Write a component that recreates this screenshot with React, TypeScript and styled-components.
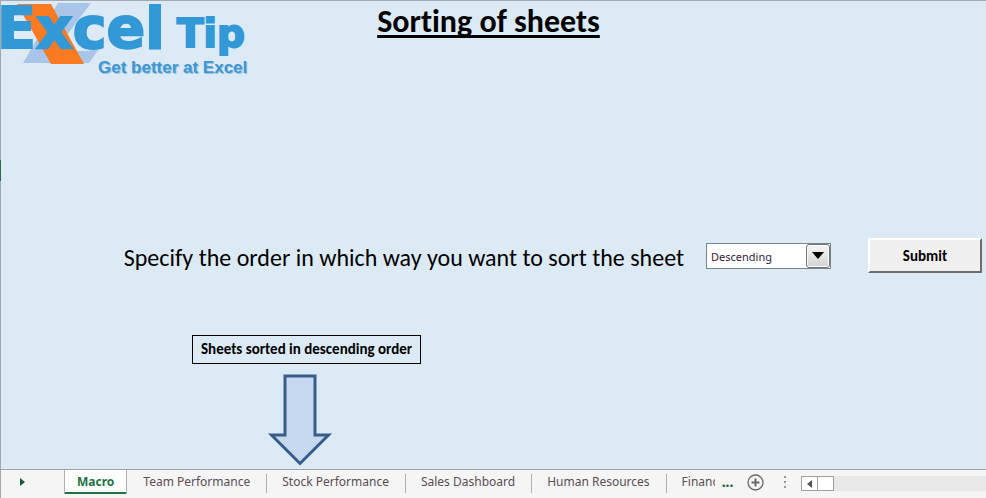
import React, { useState } from "react";
import styled, { createGlobalStyle } from "styled-components";

const GlobalStyle = createGlobalStyle`
  *, *::before, *::after { box-sizing: border-box; }
  body { margin: 0; background: #dceaf5; }
  button, select { font: inherit; color: inherit; margin: 0; }
`;

const interfaceFont = `"Noto Sans", "Open Sans", sans-serif`;
const sheetFont = `Calibri, Carlito, Lato, sans-serif`;

const Workbook = styled.div`
  display: flex;
  flex-direction: column;
  min-height: 100vh;
  border-top: 1px solid #a3a9b0;
  border-left: 1px solid #a3a9b0;
  font-family: ${interfaceFont};
  color: #000;
`;

const Sheet = styled.main`
  flex: 1;
  display: flex;
  flex-direction: column;
  background: #dceaf5;
`;

const Header = styled.header`
  display: grid;
  grid-template-columns: 1fr auto 1fr;
  align-items: start;
  padding-right: 10px;
`;

const Logo = styled.svg`
  display: block;
  width: 256px;
  height: 84px;
  overflow: visible;
`;

const Title = styled.h1`
  margin: 2px 0 0;
  font-family: ${sheetFont};
  font-size: 32px;
  line-height: 38px;
  font-weight: 700;
  text-decoration: underline;
  text-decoration-thickness: 3px;
  text-underline-offset: 3px;
  text-decoration-skip-ink: none;
  font-variant-ligatures: none;
  white-space: nowrap;
`;

const ActiveRowMark = styled.div`
  width: 1px;
  height: 21px;
  margin-top: 75px;
  margin-left: -1px;
  background: #217346;
`;

const OrderForm = styled.form`
  display: flex;
  justify-content: flex-end;
  align-items: center;
  margin-top: 57px;
  padding-right: 4px;
`;

const Prompt = styled.label`
  margin-right: 22px;
  padding-top: 4px;
  font-family: ${sheetFont};
  font-size: 24px;
  line-height: 28px;
  font-variant-ligatures: none;
  white-space: nowrap;
`;

const SelectFrame = styled.div`
  position: relative;
  width: 125px;
  height: 26px;
  margin-right: 37px;
`;

const OrderSelect = styled.select`
  appearance: none;
  width: 100%;
  height: 100%;
  padding: 2px 28px 0 4px;
  border: 1px solid #7b8288;
  border-radius: 0;
  background: #fff;
  color: #38203c;
  font-size: 11px;
`;

const SelectArrow = styled.span`
  position: absolute;
  top: 1px;
  right: 1px;
  bottom: 1px;
  display: flex;
  align-items: center;
  justify-content: center;
  width: 24px;
  border: 1px solid #70757a;
  border-radius: 3px;
  background: linear-gradient(#f5f5f5, #e6e6e6 50%, #d2d2d2);
  box-shadow: inset 0 0 0 1px #fafafa;
  pointer-events: none;
`;

const SubmitButton = styled.button`
  width: 114px;
  height: 35px;
  padding: 0;
  border: 2px solid;
  border-color: #fff #6d6d6d #6d6d6d #fff;
  background: #f0f0f0;
  font-family: ${sheetFont};
  font-size: 15px;
  font-weight: 700;
`;

const Callout = styled.section`
  display: flex;
  flex-direction: column;
  align-items: flex-start;
  margin-top: 62px;
  margin-left: 191px;
`;

const Note = styled.p`
  margin: 0;
  padding: 0 8px;
  border: 1px solid #000;
  font-family: ${sheetFont};
  font-size: 15px;
  line-height: 27px;
  font-weight: 700;
  white-space: nowrap;
`;

const DownArrow = styled.svg`
  display: block;
  width: 66px;
  height: 94px;
  margin-top: 9px;
  margin-left: 75px;
  margin-bottom: 2px;
`;

const TabBar = styled.footer`
  display: flex;
  align-items: stretch;
  height: 29px;
  padding-bottom: 4px;
  border-top: 1px solid #9aa5b1;
  background: #f5f5f5;
`;

const IconButton = styled.button<{ $width: number }>`
  display: flex;
  align-items: center;
  justify-content: center;
  flex: none;
  width: ${(p) => p.$width}px;
  padding: 0;
  border: 0;
  background: none;
  color: #185c37;
`;

const Tabs = styled.nav`
  display: flex;
  flex: none;
  margin-left: 21px;
`;

const Tab = styled.button<{ $active?: boolean }>`
  position: relative;
  flex: none;
  padding: 0 16px;
  border: 0;
  background: none;
  color: #5a4d54;
  font-size: 12px;
  line-height: 24px;
  white-space: nowrap;

  & + &::before {
    content: "";
    position: absolute;
    top: 4px;
    bottom: 1px;
    left: 0;
    width: 1px;
    background: #b0b0b0;
  }

  ${(p) =>
    p.$active &&
    `
    padding: 0 12px;
    border: solid #a9b0b8;
    border-width: 0 1px;
    box-shadow: inset 0 -2px #217346;
    background: #fff;
    color: #217346;
    font-weight: 700;
    & + button::before { display: none; }
  `}
`;

const ClippedTab = styled(Tab)`
  width: 49px;
  padding-right: 0;
  overflow: hidden;
  text-align: left;
`;

const MoreTabs = styled(IconButton)`
  font-size: 14px;
  font-weight: 700;
  padding-bottom: 2px;
`;

const ScrollBar = styled.div`
  display: flex;
  flex: 1;
  height: 15px;
  margin-top: 6px;
  margin-left: 2px;
  background: #e8e8e8;
`;

const ScrollPart = styled.button`
  display: flex;
  align-items: center;
  justify-content: center;
  width: 17px;
  padding: 0;
  border: 1px solid #a0a0a0;
  background: #fff;

  & + & { margin-left: -1px; }
`;

const sheets = ["Macro", "Team Performance", "Stock Performance", "Sales Dashboard", "Human Resources"];

function ExcelTipLogo() {
  return (
    <Logo viewBox="0 0 256 84" role="img" aria-label="Excel Tip, Get better at Excel">
      <path d="M57 2H90L54 50H86L98 48L88 62H22Z" fill="#a9c6ea" />
      <path d="M16 3H50L83 63H50Z" fill="#fa7a21" />
      <g fill="#3398d6" stroke="#3398d6" strokeWidth="2" fontFamily="'DejaVu Sans', sans-serif" fontWeight="700">
        <text x="-4" y="47" fontSize="57">Excel</text>
        <text x="176" y="46" fontSize="39">Tip</text>
      </g>
      <g fontFamily="'Liberation Sans', Arial, sans-serif" fontWeight="700" fontSize="17">
        <text x="98" y="73" fill="#9dbfdc">Get better at Excel</text>
        <text x="97" y="72" fill="#3f97d2">Get better at Excel</text>
      </g>
    </Logo>
  );
}

export default function App() {
  const [order, setOrder] = useState("Descending");
  const [active, setActive] = useState("Macro");

  return (
    <>
      <GlobalStyle />
      <Workbook>
        <Sheet>
          <Header>
            <ExcelTipLogo />
            <Title>Sorting of sheets</Title>
          </Header>
          <ActiveRowMark />
          <OrderForm onSubmit={(e) => e.preventDefault()}>
            <Prompt htmlFor="order">Specify the order in which way you want to sort the sheet</Prompt>
            <SelectFrame>
              <OrderSelect id="order" value={order} onChange={(e) => setOrder(e.target.value)}>
                <option>Ascending</option>
                <option>Descending</option>
              </OrderSelect>
              <SelectArrow>
                <svg width="12" height="7" viewBox="0 0 12 7" aria-hidden="true">
                  <path d="M0 0H12L6 7Z" fill="#000" />
                </svg>
              </SelectArrow>
            </SelectFrame>
            <SubmitButton type="submit">Submit</SubmitButton>
          </OrderForm>
          <Callout>
            <Note>Sheets sorted in descending order</Note>
            <DownArrow viewBox="0 0 66 94" aria-hidden="true">
              <path d="M18 3H48V62H61.500L33 90.500L4.500 62H18Z" fill="#c6d9f1" stroke="#385d8a" strokeWidth="3" />
            </DownArrow>
          </Callout>
        </Sheet>
        <TabBar>
          <IconButton type="button" $width={42} aria-label="Next sheets">
            <svg width="5" height="8" viewBox="0 0 5 8" aria-hidden="true">
              <path d="M0 0L5 4L0 8Z" fill="currentColor" />
            </svg>
          </IconButton>
          <Tabs aria-label="Sheets">
            {sheets.map((name) => (
              <Tab key={name} type="button" $active={name === active} onClick={() => setActive(name)}>
                {name}
              </Tab>
            ))}
            <ClippedTab type="button">Finance</ClippedTab>
          </Tabs>
          <MoreTabs type="button" $width={26} aria-label="More sheets">...</MoreTabs>
          <IconButton type="button" $width={30} aria-label="New sheet">
            <svg width="17" height="17" viewBox="0 0 17 17" fill="none" stroke="#6b6b6b" aria-hidden="true">
              <circle cx="8.500" cy="8.500" r="7.500" strokeWidth="1.300" />
              <path d="M8.500 4.500V12.500M4.500 8.500H12.500" strokeWidth="2" />
            </svg>
          </IconButton>
          <IconButton as="span" $width={28}>
            <svg width="2" height="12" viewBox="0 0 2 12" fill="#9a9a9a" aria-hidden="true">
              <path d="M0 0h2v2H0zM0 5h2v2H0zM0 10h2v2H0z" />
            </svg>
          </IconButton>
          <ScrollBar>
            <ScrollPart type="button" aria-label="Scroll left">
              <svg width="5" height="8" viewBox="0 0 5 8" aria-hidden="true">
                <path d="M5 0L0 4L5 8Z" fill="#555" />
              </svg>
            </ScrollPart>
            <ScrollPart type="button" aria-label="Scroll thumb" />
          </ScrollBar>
        </TabBar>
      </Workbook>
    </>
  );
}
